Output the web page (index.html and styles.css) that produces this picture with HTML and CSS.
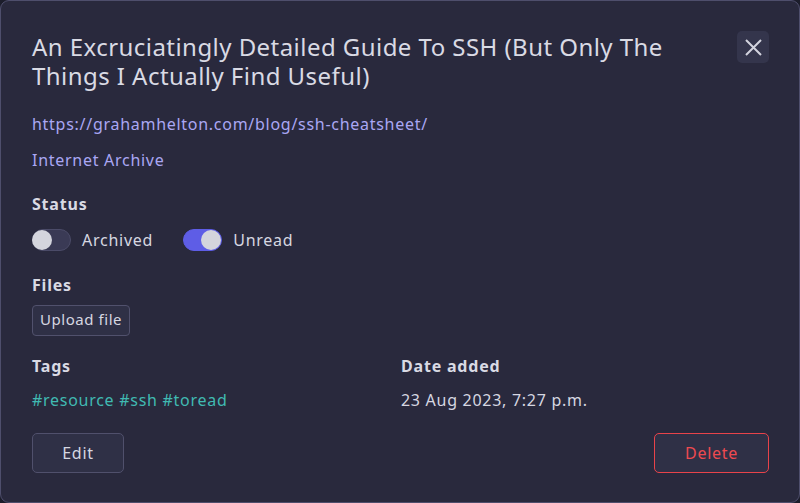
FILE: index.html
```html
<!DOCTYPE html>
<html lang="en">
<head>
<meta charset="utf-8">
<link rel="stylesheet" href="styles.css">
</head>
<body>
<div class="modal">
  <div class="header">
    <h1 class="title">An Excruciatingly Detailed Guide To SSH (But Only The Things I Actually Find Useful)</h1>
    <button class="close" aria-label="Close">
      <svg width="17" height="17" viewBox="0 0 17 17"><path d="M1 1L16 16M16 1L1 16" stroke="#d2d3de" stroke-width="2" fill="none"/></svg>
    </button>
  </div>
  <a class="link url" href="#">https://grahamhelton.com/blog/ssh-cheatsheet/</a>
  <a class="link archive" href="#">Internet Archive</a>

  <h2 class="label status-label">Status</h2>
  <div class="toggles">
    <label class="toggle"><span class="track"><span class="knob"></span></span><span>Archived</span></label>
    <label class="toggle on"><span class="track"><span class="knob"></span></span><span>Unread</span></label>
  </div>

  <h2 class="label files-label">Files</h2>
  <div><button class="upload">Upload file</button></div>

  <div class="meta">
    <div>
      <h2 class="label">Tags</h2>
      <div class="tags">#resource #ssh #toread</div>
    </div>
    <div>
      <h2 class="label">Date added</h2>
      <div class="date">23 Aug 2023, 7:27 p.m.</div>
    </div>
  </div>

  <div class="actions">
    <button class="btn edit">Edit</button>
    <button class="btn delete">Delete</button>
  </div>
</div>
</body>
</html>
```
FILE: styles.css
```css
html, body {
  margin: 0;
  padding: 0;
  background: #1c1d2b;
}
body {
  font-family: "Noto Sans", "Open Sans", sans-serif;
  color: #d6d7e1;
  width: 800px;
  height: 503px;
}
.modal {
  box-sizing: border-box;
  width: 800px;
  height: 503px;
  background: #29293d;
  border: 1px solid #4e4e6c;
  border-radius: 9px;
  padding: 25px 30px 0 31px;
  display: flex;
  flex-direction: column;
}
.header {
  display: flex;
  justify-content: space-between;
  align-items: flex-start;
}
.title {
  margin: 6px 0 0 0;
  font-size: 24px;
  font-weight: 400;
  line-height: 29px;
  letter-spacing: 0.45px;
  color: #d9dae4;
  width: 670px;
}
.close {
  margin-top: 5px;
  width: 32px;
  height: 32px;
  border: none;
  border-radius: 5px;
  background: #34354c;
  display: flex;
  align-items: center;
  justify-content: center;
  padding: 0;
}
.link {
  color: #aaa7f4;
  text-decoration: none;
  font-size: 16px;
  line-height: 22px;
  letter-spacing: 0.72px;
  align-self: flex-start;
}
.url { margin-top: 23px; }
.archive { margin-top: 14px; }
.label {
  margin: 0;
  font-size: 16px;
  font-weight: 700;
  line-height: 22px;
  letter-spacing: 0.8px;
  color: #d9dae4;
}
.status-label { margin-top: 22px; }
.toggles {
  display: flex;
  gap: 30px;
  margin-top: 14px;
  letter-spacing: 0.75px;
}
.toggle {
  display: flex;
  align-items: center;
  gap: 11px;
  font-size: 16px;
  line-height: 22px;
}
.track {
  box-sizing: border-box;
  width: 39px;
  height: 22px;
  border-radius: 11px;
  background: #3a3a55;
  border: 1px solid #4b4b68;
  display: flex;
  align-items: center;
}
.knob {
  width: 20px;
  height: 20px;
  border-radius: 50%;
  background: #d4d5dd;
  margin-left: -1px;
}
.toggle.on .track {
  background: #5e5de6;
  border-color: #5e5de6;
  justify-content: flex-end;
}
.toggle.on .knob { margin-left: 0; }
.files-label { margin-top: 23px; }
.upload {
  margin-top: 9px;
  font-family: inherit;
  font-size: 15px;
  letter-spacing: 0.55px;
  color: #d6d7e1;
  background: #2f3046;
  border: 1px solid #51516d;
  border-radius: 4px;
  padding: 3px 7px 5px 7px;
  line-height: 21px;
}
.meta {
  display: grid;
  grid-template-columns: 369px 1fr;
  margin-top: 19px;
}
.tags, .date {
  margin-top: 12px;
  font-size: 16px;
  line-height: 22px;
  letter-spacing: 0.72px;
}
.tags { color: #40bab2; }
.actions {
  display: flex;
  justify-content: space-between;
  margin-top: 22px;
}
.btn {
  font-family: inherit;
  font-size: 16px;
  letter-spacing: 0.72px;
  height: 40px;
  border-radius: 5px;
  background: #2f3046;
  border: 1px solid #50506c;
  color: #d6d7e1;
}
.edit { width: 92px; }
.delete {
  width: 115px;
  color: #ee4a50;
  border-color: #e8434a;
}
```
